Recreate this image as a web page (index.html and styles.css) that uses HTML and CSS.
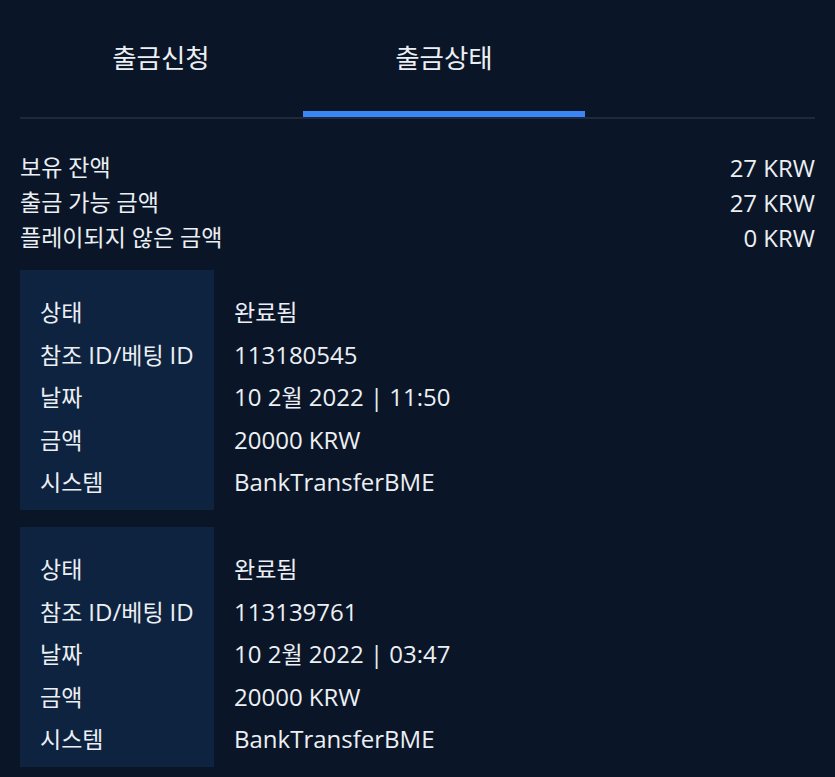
FILE: index.html
```html
<!DOCTYPE html>
<html lang="ko">
<head>
<meta charset="utf-8">
<link rel="stylesheet" href="styles.css">
</head>
<body>
<div class="page">
  <nav class="tabs">
    <div class="tab">출금신청</div>
    <div class="tab active">출금상태</div>
  </nav>

  <section class="balances">
    <div class="bal-row"><span>보유 잔액</span><span class="l">27 KRW</span></div>
    <div class="bal-row"><span>출금 가능 금액</span><span class="l">27 KRW</span></div>
    <div class="bal-row"><span>플레이되지 않은 금액</span><span class="l">0 KRW</span></div>
  </section>

  <section class="card">
    <div class="labels">
      <div class="row">상태</div>
      <div class="row">참조 <span class="l">ID/</span>베팅 <span class="l">ID</span></div>
      <div class="row">날짜</div>
      <div class="row">금액</div>
      <div class="row">시스템</div>
    </div>
    <div class="values">
      <div class="row">완료됨</div>
      <div class="row"><span class="l">113180545</span></div>
      <div class="row"><span class="l">10 2</span>월<span class="l"> 2022 | 11:50</span></div>
      <div class="row"><span class="l">20000 KRW</span></div>
      <div class="row"><span class="l">BankTransferBME</span></div>
    </div>
  </section>

  <section class="card">
    <div class="labels">
      <div class="row">상태</div>
      <div class="row">참조 <span class="l">ID/</span>베팅 <span class="l">ID</span></div>
      <div class="row">날짜</div>
      <div class="row">금액</div>
      <div class="row">시스템</div>
    </div>
    <div class="values">
      <div class="row">완료됨</div>
      <div class="row"><span class="l">113139761</span></div>
      <div class="row"><span class="l">10 2</span>월<span class="l"> 2022 | 03:47</span></div>
      <div class="row"><span class="l">20000 KRW</span></div>
      <div class="row"><span class="l">BankTransferBME</span></div>
    </div>
  </section>
</div>
</body>
</html>
```

FILE: styles.css
```css
* { box-sizing: border-box; }

html, body {
  margin: 0;
  padding: 0;
  background: #0a1628;
}

body {
  font-family: "Open Sans", "Noto Sans CJK KR", sans-serif;
  font-size: 23px;
  color: #eceff3;
  height: 777px;
  overflow: hidden;
}

.page {
  padding: 0 20px;
}

.l {
  font-size: 24px;
}

.tabs {
  display: flex;
  border-bottom: 2px solid #1e2a3b;
}

.tab {
  width: 282px;
  height: 117px;
  padding-top: 42px;
  font-size: 26.5px;
  line-height: 32px;
  text-align: center;
  border-bottom: 6px solid transparent;
}

.tab.active {
  border-bottom-color: #3b86f6;
  margin-left: 1px;
}

.balances {
  padding-top: 31px;
  display: flex;
  flex-direction: column;
}

.bal-row {
  display: flex;
  justify-content: space-between;
  align-items: center;
  height: 35px;
  line-height: 35px;
}

.card {
  display: flex;
  margin-top: 15px;
  height: 240px;
}

.card + .card {
  margin-top: 17px;
}

.labels {
  width: 194px;
  background: #0e2340;
  padding: 21px 0 7px 20px;
}

.values {
  padding: 21px 0 7px 20px;
}

.row {
  height: 42.5px;
  line-height: 42.5px;
  white-space: nowrap;
}
```
